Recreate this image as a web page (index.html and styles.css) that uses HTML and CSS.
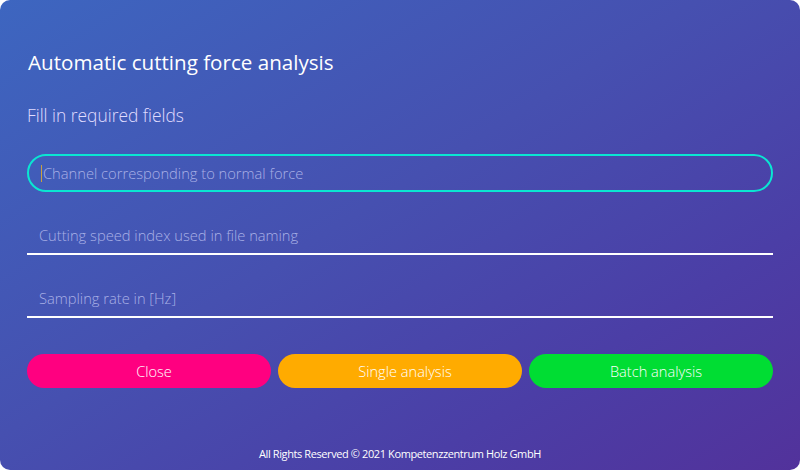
FILE: index.html
```html
<!DOCTYPE html>
<html>
<head>
<meta charset="utf-8">
<link rel="stylesheet" href="styles.css">
</head>
<body>
<div class="window">
  <h1 class="title">Automatic cutting force analysis</h1>
  <p class="subtitle">Fill in required fields</p>
  <form class="form">
    <div class="field field-focused"><span class="caret"></span><span class="ph">Channel corresponding to normal force</span></div>
    <div class="field field-line"><span class="ph">Cutting speed index used in file naming</span></div>
    <div class="field field-line"><span class="ph">Sampling rate in [Hz]</span></div>
    <div class="buttons">
      <button type="button" class="btn btn-close">Close</button>
      <button type="button" class="btn btn-single">Single analysis</button>
      <button type="button" class="btn btn-batch">Batch analysis</button>
    </div>
  </form>
  <div class="footer">All Rights Reserved © 2021 Kompetenzzentrum Holz GmbH</div>
</div>
</body>
</html>
```
FILE: styles.css
```css
html, body {
  margin: 0;
  padding: 0;
  background: #ffffff;
}
.window {
  width: 800px;
  height: 470px;
  box-sizing: border-box;
  border-radius: 10px;
  background: linear-gradient(148deg, #3d66c0 0%, #4650b0 45%, #4b3ea6 75%, #52329b 100%);
  padding: 48px 27px 0 27px;
  display: flex;
  flex-direction: column;
  font-family: "Open Sans", "Noto Sans", sans-serif;
  color: #ffffff;
}
.title {
  margin: 0 0 0 1px;
  font-size: 20.6px;
  font-weight: 400;
  line-height: 28px;
}
.subtitle {
  margin: 28px 0 0 0;
  font-size: 17.4px;
  font-weight: 300;
  line-height: 22px;
  color: #e0dcff;
}
.form {
  margin: 28px 0 0 0;
  display: flex;
  flex-direction: column;
}
.field {
  height: 38px;
  box-sizing: border-box;
  display: flex;
  align-items: center;
  padding-left: 12px;
}
.field-focused {
  border: 2px solid #0ae6d2;
  border-radius: 19px;
  padding-left: 12px;
}
.field-line {
  margin-top: 25px;
  border-bottom: 2px solid #ffffff;
  height: 38px;
  padding-top: 0;
}
.caret {
  width: 1px;
  height: 17px;
  background: #c8a040;
  margin-right: 1px;
}
.ph {
  font-size: 14.7px;
  font-weight: 300;
  color: #a9b0e6;
  line-height: 20px;
}
.buttons {
  margin-top: 36px;
  display: flex;
  gap: 7px;
}
.btn {
  flex: 1;
  height: 34px;
  border: none;
  border-radius: 17px;
  color: #ffffff;
  font-family: "Open Sans", "Noto Sans", sans-serif;
  font-size: 14.6px;
  font-weight: 300;
  padding: 0 0 0 10px;
}
.btn-close { background: #ff0080; }
.btn-single { background: #ffab00; }
.btn-batch { background: #00dd33; }
.footer {
  margin-top: auto;
  margin-bottom: 8px;
  text-align: center;
  font-size: 11px;
  letter-spacing: -0.4px;
  color: #ffffff;
  line-height: 16px;
}
```
